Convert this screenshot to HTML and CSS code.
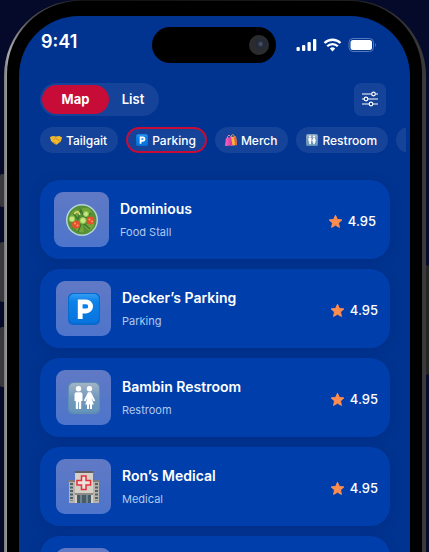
FILE: index.html
```html
<!DOCTYPE html>
<html lang="en">
<head>
<meta charset="utf-8">
<meta name="viewport" content="width=device-width, initial-scale=1">
<title>Venue list</title>
<link rel="stylesheet" href="styles.css">
</head>
<body>
<svg class="symbols" aria-hidden="true">
  <symbol id="star" viewBox="0 0 24 24"><path d="M12 2l3 6.600 7.200.8-5.400 4.900 1.500 7.200L12 17.900l-6.300 3.600 1.500-7.200L1.800 9.400 9 8.600z" fill="#ff8d50" stroke="#ff8d50" stroke-width="1.500" stroke-linejoin="round"/></symbol>
  <symbol id="parking" viewBox="0 0 32 32">
    <rect width="32" height="32" rx="5" fill="#0869ce"/><rect x="1" y="1" width="30" height="29" rx="5" fill="url(#blue)"/>
    <path d="M12.200 26V8.800H18a4.600 4.600 0 0 1 0 9.200h-5.500" fill="none" stroke="#fff" stroke-width="4.800"/>
  </symbol>
  <symbol id="restroom" viewBox="0 0 32 32">
    <rect width="32" height="32" rx="5" fill="#5f8fb5"/><rect x="1" y="1" width="30" height="29" rx="5" fill="url(#slate)"/>
    <g fill="#fff"><circle cx="10.500" cy="6.800" r="2.700"/><circle cx="21.500" cy="6.800" r="2.700"/>
    <path d="M8.500 10.300h4a2 2 0 0 1 2 2V19h-1.300v8h-2.300v-7h-.8v7H7.800v-8H6.500v-6.700a2 2 0 0 1 2-2z"/>
    <path d="M20 10.300h3l4.200 8.200-1.500.9-2.200-3.400 2.300 6.500H24V27h-2v-4.500h-1V27h-2v-4.500h-1.800l2.300-6.500-2.200 3.400-1.500-.9z"/></g>
  </symbol>
  <defs>
    <linearGradient id="blue" x2="0" y2="1"><stop stop-color="#359cf2"/><stop offset=".25" stop-color="#0b82ea"/><stop offset="1" stop-color="#0873dc"/></linearGradient>
    <linearGradient id="slate" x2="0" y2="1"><stop stop-color="#a3b4c6"/><stop offset=".5" stop-color="#7399bd"/><stop offset="1" stop-color="#6694ba"/></linearGradient>
    <linearGradient id="bag" x2="1"><stop stop-color="#f06bc2"/><stop offset="1" stop-color="#d62e9c"/></linearGradient>
  </defs>
</svg>
<div class="stage">
  <span class="side-key key-top"></span><span class="side-key key-mid"></span><span class="side-key key-low"></span><span class="side-key key-power"></span>
  <div class="phone">
    <div class="bezel">
      <main class="screen">
        <header class="status">
          <time>9:41</time>
          <div class="island"><span class="lens"></span></div>
          <svg class="signals" viewBox="0 0 80 16" aria-label="Signal, Wi-Fi and battery">
            <g fill="#fff"><rect x="0.500" y="10" width="3.300" height="4" rx="1"/><rect x="6" y="8" width="3.300" height="6" rx="1"/><rect x="11.500" y="5" width="3.300" height="9" rx="1"/><rect x="17" y="2" width="3.300" height="12" rx="1"/></g>
            <g fill="none" stroke="#fff" stroke-width="2.300"><path d="M28.500 6a11.500 11.500 0 0 1 16 0M31.200 9.300a7.500 7.500 0 0 1 10.600 0"/></g><path d="M33.800 11.500a4 4 0 0 1 5.400 0L36.500 14.400z" fill="#fff"/>
            <rect x="53" y="1.500" width="24.500" height="13" rx="4" fill="none" stroke="#5579bb"/><rect x="54.500" y="3" width="21.500" height="10" rx="2.500" fill="#fff"/><path d="M79 6v4q1.500-2 0-4z" fill="#6687c1"/>
          </svg>
        </header>
        <div class="toolbar">
          <div class="switch"><button class="option selected">Map</button><button class="option">List</button></div>
          <button class="filter" aria-label="Filters"><svg viewBox="0 0 18 18" fill="none" stroke="#fff" stroke-width="1.200"><path d="M1 4h9.500m4 0H17M1 9h2m4 0h10M1 14h7m4 0h5"/><circle cx="12.500" cy="4" r="1.800"/><circle cx="5" cy="9" r="1.800"/><circle cx="10" cy="14" r="1.800"/></svg></button>
        </div>
        <nav class="chips">
          <button class="chip"><svg viewBox="0 0 12 12"><path d="M0 3l3-1 3 .6L9 2l3 1.200-1 4-4.500 3.600L4.500 10 1 7z" fill="#f2b92f"/><path d="M3.500 5.500l2-1.700L10 7.500M3 8l3 2" fill="none" stroke="#b77a17" stroke-width=".7"/></svg>Tailgait</button>
          <button class="chip active"><svg viewBox="0 0 32 32"><use href="#parking"/></svg>Parking</button>
          <button class="chip"><svg viewBox="0 0 12 12"><path d="M6 4V2q2-3 3.500 0v2" fill="none" stroke="#e6a43d"/><path d="M5 3l6-.5 1 8.500-6 .8z" fill="#f7b532"/><path d="M9 3l2-.5 1 8.500-2 .3z" fill="#e55c55"/><path d="M2.500 5V2.500q1.500-3 3 0V5" fill="none" stroke="#e783c5"/><path d="M1 4l5-1 1.500 8.500L0 12z" fill="url(#bag)"/></svg>Merch</button>
          <button class="chip"><svg viewBox="0 0 32 32"><use href="#restroom"/></svg>Restroom</button>
          <button class="chip next" aria-label="More categories"></button>
        </nav>
        <section class="places">
          <article class="card">
            <div class="tile"><svg viewBox="0 0 32 32">
              <circle cx="16" cy="16" r="16" fill="#b7d5d6"/><circle cx="16" cy="16" r="14.500" fill="#558f38"/>
              <path d="M4 13q2-9 9-7l-1 7zM15 5q8-4 11 4l-7 4zM8 21l8-5 2 12q-8 2-10-7zM18 22l8-5q5 5-3 10z" fill="#72a63a"/>
              <path d="M7 9l5 6 3-9 4 8 6-5M12 28l4-10 8 7" fill="none" stroke="#3d7430" stroke-width="1.200"/>
              <g fill="#e5512f"><circle cx="10" cy="20.500" r="4"/><circle cx="24.500" cy="16.500" r="4"/></g>
              <g fill="#f7a069"><circle cx="9" cy="19.500" r="1"/><circle cx="11.500" cy="21.500" r="1"/><circle cx="23.500" cy="15.500" r="1"/><circle cx="26" cy="17.500" r="1"/></g>
              <g fill="#c9e883" stroke="#92c64a"><circle cx="6" cy="15" r="2.800"/><circle cx="17" cy="16.500" r="3"/><circle cx="20" cy="10" r="2.500"/></g><path d="M8 10q4-5 6 1" fill="none" stroke="#e5db73" stroke-width="1.500"/>
            </svg></div>
            <div class="copy"><h2>Dominious</h2><p>Food Stall</p></div>
            <div class="rating"><svg><use href="#star"/></svg>4.95</div>
          </article>
          <article class="card">
            <div class="tile"><svg viewBox="0 0 32 32"><use href="#parking"/></svg></div>
            <div class="copy"><h2>Decker’s Parking</h2><p>Parking</p></div>
            <div class="rating"><svg><use href="#star"/></svg>4.95</div>
          </article>
          <article class="card">
            <div class="tile"><svg viewBox="0 0 32 32"><use href="#restroom"/></svg></div>
            <div class="copy"><h2>Bambin Restroom</h2><p>Restroom</p></div>
            <div class="rating"><svg><use href="#star"/></svg>4.95</div>
          </article>
          <article class="card">
            <div class="tile"><svg viewBox="0 0 32 32">
              <path d="M1 9h8v23H1zM24 9h7v23h-7z" fill="#b9b3ad"/><path d="M0 9h9v2H0zM23 9h9v2h-9z" fill="#807c7c"/>
              <path d="M7 2h18v30H7z" fill="#d7d0c7"/><path d="M7 0h18v2H7z" fill="#625f63"/>
              <path d="M3.500 12v18M28.500 12v18" stroke="#4c6269" stroke-width="3" stroke-dasharray="2 1.500"/>
              <path d="M7 22h18v2H7z" fill="#8d8985"/><path d="M9 24h14v8H9z" fill="#465d69"/><path d="M13 24v8m6-8v8" stroke="#9eabad"/>
              <path d="M13.500 5h4.500v4.500h4.500V14H18v4.500h-4.500V14H9V9.500h4.500z" fill="#eee0da" stroke="#e3313b" stroke-width="1.500"/>
            </svg></div>
            <div class="copy"><h2>Ron’s Medical</h2><p>Medical</p></div>
            <div class="rating"><svg><use href="#star"/></svg>4.95</div>
          </article>
          <article class="card"><div class="tile"></div></article>
        </section>
      </main>
    </div>
  </div>
</div>
</body>
</html>
```
FILE: styles.css
```css
* { box-sizing: border-box; }
body { margin: 0; background: #050a2b; color: #fff; font-family: Inter, sans-serif; }
button { border: 0; color: inherit; font: inherit; }
.symbols { position: absolute; width: 0; height: 0; }
.stage { position: relative; height: 100vh; overflow: hidden; padding: 0 3px 0 4px; }
.side-key { position: absolute; left: 0; width: 5px; background: #39393d; border-radius: 2px; }
.key-top { top: 174px; height: 33px; }
.key-mid { top: 242px; height: 60px; }
.key-low { top: 327px; height: 60px; }
.key-power { top: 265px; right: 0; left: auto; height: 110px; background: #242426; }
.phone { position: relative; min-height: 120vh; padding: 1px 4px 0 3px; border-radius: 76px 76px 0 0; background: linear-gradient(90deg, #77777a 0, #aaa 4px, #55555a 24px, #111114 80px, #1c1c1f 80%, #3a3a3a); }
.bezel { min-height: 120vh; padding: 15px 12px 0; background: #000; border-radius: 73px 72px 0 0; }
.screen { min-height: 120vh; overflow: hidden; border-radius: 60px 60px 0 0; background: #003490; padding: 11px 0 0 21px; }
.status { display: grid; grid-template-columns: 112px 124px 1fr; align-items: center; height: 36px; }
.status time { font-size: 18px; font-weight: 600; line-height: 20px; padding-bottom: 6px; padding-left: 1px; }
.island { display: flex; justify-content: flex-end; align-items: center; height: 36px; padding-right: 7px; background: #000; border-radius: 18px; }
.lens { width: 20px; height: 20px; border-radius: 50%; background: radial-gradient(circle at 58% 45%, #465069 0 1px, #252a37 3px 5px, #2c2c2f 7px); }
.signals { width: 80px; height: 16px; margin-left: 20px; }
.toolbar { display: flex; justify-content: space-between; align-items: center; padding-right: 24px; margin-top: 19px; height: 34px; }
.switch { display: flex; height: 33px; padding: 2px; border-radius: 17px; background: #16439a; }
.option { width: 48px; padding: 0; background: transparent; font-size: 13px; font-weight: 600; border-radius: 15px; }
.option.selected { width: 67px; background: #c60c37; font-weight: 700; }
.filter { display: grid; place-items: center; width: 32px; height: 33px; padding: 0; border-radius: 7px; background: #16439a; }
.filter svg { width: 18px; height: 18px; }
.chips { display: flex; gap: 8px; margin: 11px 4px 0 0; overflow: hidden; }
.chip { display: flex; flex: none; align-items: center; gap: 4px; height: 26px; padding: 0 11px 0 10px; border-radius: 13px; background: #16439a; font-size: 12px; font-weight: 500; }
.chip.active { border: 2px solid #c60c37; padding: 0 9px 0 8px; }
.chip.next { width: 70px; }
.chip svg { width: 12px; height: 12px; }
.places { display: grid; gap: 10px; padding-right: 20px; margin-top: 27px; }
.card { display: flex; align-items: center; height: 79px; padding: 0 12px 0 16px; border-radius: 20px; background: #003fab; box-shadow: 0 2px 12px #00257555; }
.card:first-child { padding: 0 14px; }
.tile { display: grid; place-items: center; width: 55px; height: 55px; border-radius: 9px; background: linear-gradient(#6079c5, #4d75cb); }
.tile svg { width: 32px; height: 32px; }
.copy { flex: 1; padding-left: 11px; }
h2, p { margin: 0; }
h2 { font-size: 14px; font-weight: 600; line-height: 18px; }
p { margin-top: 7px; font-size: 11px; line-height: 14px; color: #b2c9ef; }
.rating { display: flex; align-items: center; gap: 5px; padding-top: 3px; font-size: 13px; font-weight: 500; line-height: 16px; }
.rating svg { width: 15px; height: 15px; }
```
